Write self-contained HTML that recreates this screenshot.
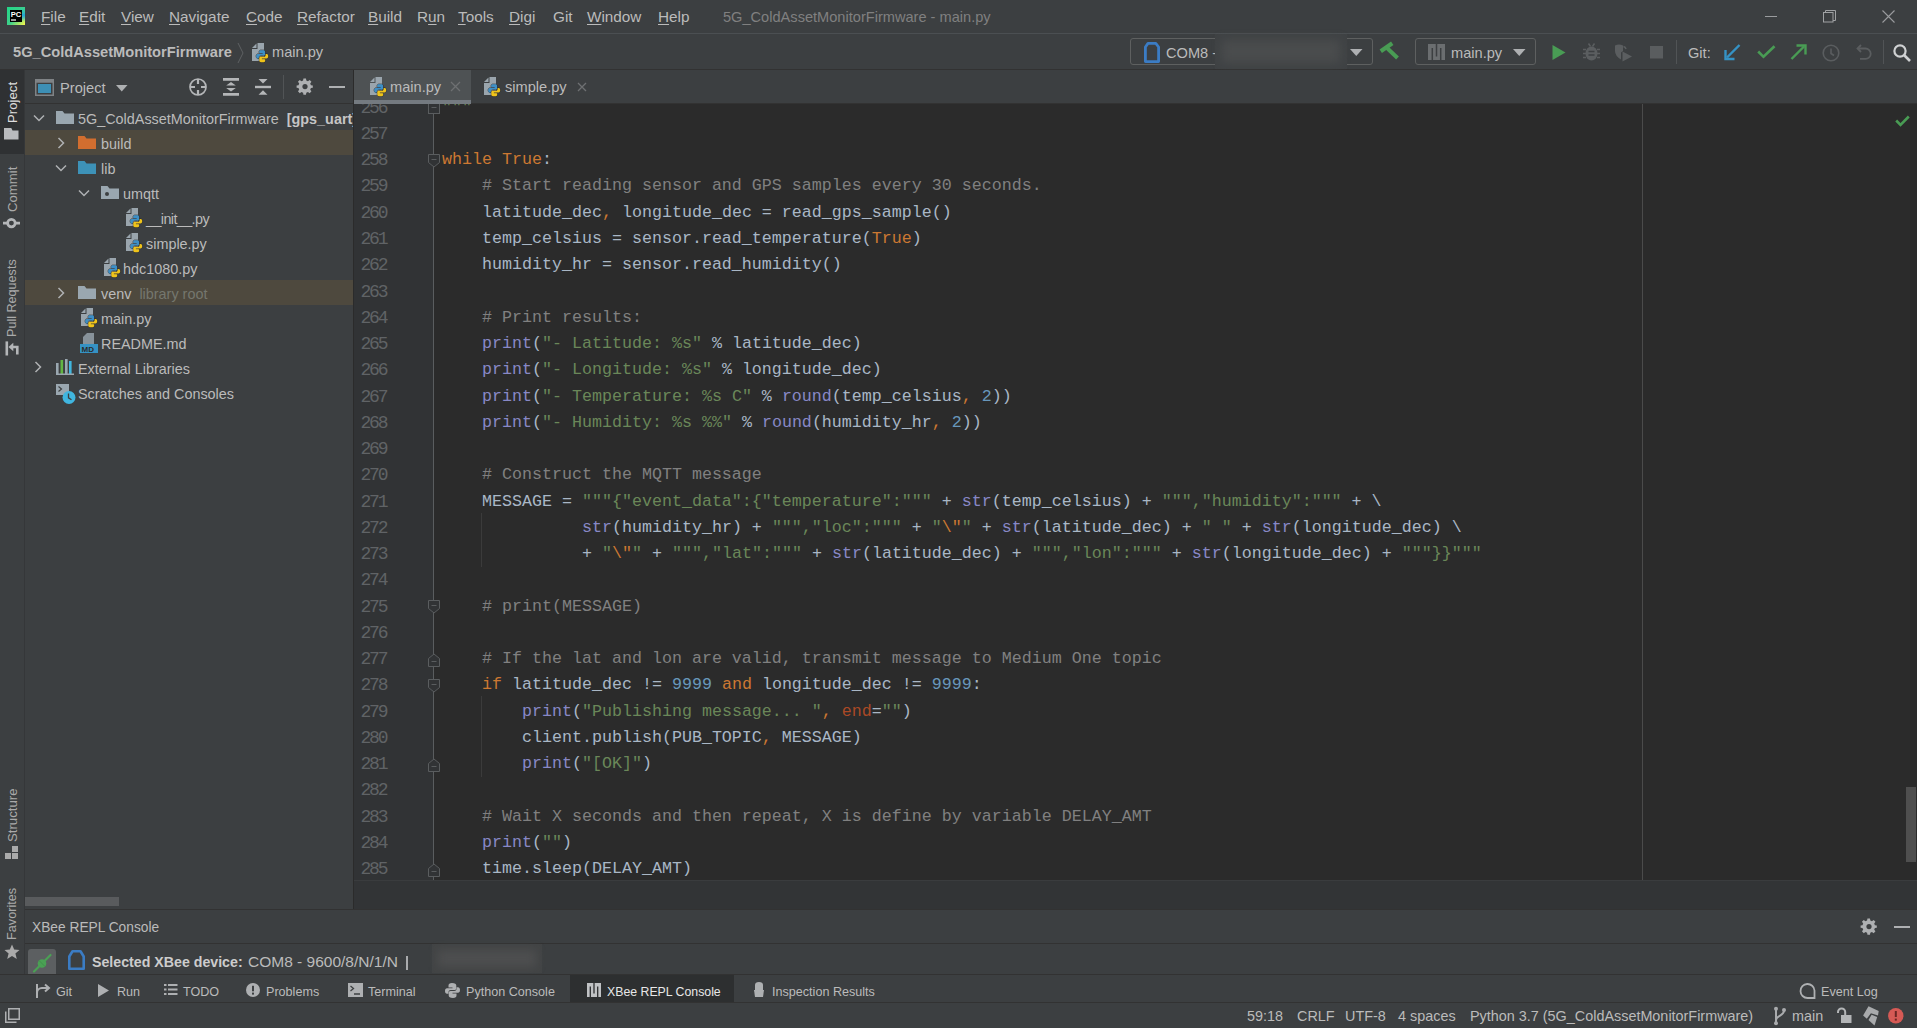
<!DOCTYPE html>
<html><head><meta charset="utf-8">
<style>
*{margin:0;padding:0;box-sizing:border-box}
html,body{width:1917px;height:1028px;overflow:hidden;background:#3c3f41;font-family:"Liberation Sans",sans-serif;font-size:14.5px;color:#bbbbbb}
.a{position:absolute}
.t{position:absolute;white-space:pre;line-height:1}
svg{position:absolute;overflow:visible}
.code{position:absolute;font-family:"Liberation Mono",monospace;font-size:16.67px;line-height:1;color:#a9b7c6;white-space:pre}
.ln{position:absolute;width:40px;text-align:right;font-family:"Liberation Mono",monospace;font-size:18px;letter-spacing:-2.1px;line-height:1;color:#606366;white-space:pre}
.k{color:#cc7832}.c{color:#808080}.s{color:#6a8759}.n{color:#6897bb}.b{color:#8888c6}.p{color:#aa4926}
</style></head><body>

<div class="a" style="left:0px;top:0px;width:1917px;height:33px;background:#3c3f41;"></div>
<div class="a" style="left:0px;top:33px;width:1917px;height:1px;background:#4b4f52;"></div>
<svg style="left:7px;top:7px;" width="18" height="18" viewBox="0 0 18 18"><defs><linearGradient id="pcg" x1="0" y1="0" x2="1" y2="1"><stop offset="0" stop-color="#21d789"/><stop offset="0.55" stop-color="#3fd08a"/><stop offset="1" stop-color="#fcf84a"/></linearGradient>
<linearGradient id="pcb" x1="0" y1="0" x2="0" y2="1"><stop offset="0" stop-color="#21c8b0" stop-opacity="0"/><stop offset="0.45" stop-color="#1fa5d8"/><stop offset="0.8" stop-color="#1fa5d8" stop-opacity="0"/></linearGradient></defs>
<rect x="0" y="0" width="18" height="18" fill="url(#pcg)"/><rect x="13" y="0" width="5" height="18" fill="url(#pcb)"/><rect x="3" y="3" width="12" height="12" fill="#000"/>
<text x="3.8" y="9.9" font-family="Liberation Sans" font-weight="bold" font-size="7.6" fill="#fff">PC</text><rect x="4" y="12.3" width="5" height="1.4" fill="#ddd"/></svg>
<div class="t" style="left:41px;top:9.05px;font-size:15.3px;color:#bbbbbb;"><span style="text-decoration:underline;text-underline-offset:2px">F</span>ile</div>
<div class="t" style="left:79px;top:9.05px;font-size:15.3px;color:#bbbbbb;"><span style="text-decoration:underline;text-underline-offset:2px">E</span>dit</div>
<div class="t" style="left:121px;top:9.05px;font-size:15.3px;color:#bbbbbb;"><span style="text-decoration:underline;text-underline-offset:2px">V</span>iew</div>
<div class="t" style="left:169px;top:9.05px;font-size:15.3px;color:#bbbbbb;"><span style="text-decoration:underline;text-underline-offset:2px">N</span>avigate</div>
<div class="t" style="left:246px;top:9.05px;font-size:15.3px;color:#bbbbbb;"><span style="text-decoration:underline;text-underline-offset:2px">C</span>ode</div>
<div class="t" style="left:297px;top:9.05px;font-size:15.3px;color:#bbbbbb;"><span style="text-decoration:underline;text-underline-offset:2px">R</span>efactor</div>
<div class="t" style="left:368px;top:9.05px;font-size:15.3px;color:#bbbbbb;"><span style="text-decoration:underline;text-underline-offset:2px">B</span>uild</div>
<div class="t" style="left:417px;top:9.05px;font-size:15.3px;color:#bbbbbb;">R<span style="text-decoration:underline;text-underline-offset:2px">u</span>n</div>
<div class="t" style="left:458px;top:9.05px;font-size:15.3px;color:#bbbbbb;"><span style="text-decoration:underline;text-underline-offset:2px">T</span>ools</div>
<div class="t" style="left:509px;top:9.05px;font-size:15.3px;color:#bbbbbb;"><span style="text-decoration:underline;text-underline-offset:2px">D</span>igi</div>
<div class="t" style="left:553px;top:9.05px;font-size:15.3px;color:#bbbbbb;">Git</div>
<div class="t" style="left:587px;top:9.05px;font-size:15.3px;color:#bbbbbb;"><span style="text-decoration:underline;text-underline-offset:2px">W</span>indow</div>
<div class="t" style="left:658px;top:9.05px;font-size:15.3px;color:#bbbbbb;"><span style="text-decoration:underline;text-underline-offset:2px">H</span>elp</div>
<div class="t" style="left:723px;top:9.64px;font-size:14.6px;color:#808080;">5G_ColdAssetMonitorFirmware - main.py</div>
<svg style="left:1765px;top:10px;" width="14" height="14" viewBox="0 0 14 14"><line x1="0" y1="6.5" x2="12" y2="6.5" stroke="#9a9c9e" stroke-width="1"/></svg>
<svg style="left:1823px;top:10px;" width="14" height="14" viewBox="0 0 14 14"><rect x="0.5" y="2.5" width="9.5" height="9.5" fill="none" stroke="#a0a2a4"/><path d="M2.5 2.5V0.5H12.5V10.5H10" fill="none" stroke="#a0a2a4"/></svg>
<svg style="left:1882px;top:10px;" width="13" height="13" viewBox="0 0 13 13"><path d="M0.5 0.5L12.5 12.5M12.5 0.5L0.5 12.5" stroke="#9a9c9e" stroke-width="1.1"/></svg>
<div class="a" style="left:0px;top:34px;width:1917px;height:35px;background:#3c3f41;"></div>
<div class="a" style="left:0px;top:69px;width:1917px;height:1px;background:#323232;"></div>
<div class="t" style="left:13px;top:44.60px;font-size:14.65px;color:#bbbbbb;font-weight:bold;">5G_ColdAssetMonitorFirmware</div>
<svg style="left:237px;top:42px;" width="8" height="22" viewBox="0 0 8 22"><path d="M1 1L6 11L1 21" fill="none" stroke="#5e6163" stroke-width="1"/></svg>
<svg style="left:251px;top:43px;" width="18" height="20" viewBox="0 0 18 20"><path d="M6.5 0H13V18H1V6H6.5Z" fill="#9aa5ad"/><path d="M1 5L5.5 0.5V5Z" fill="#9aa5ad"/>
<g transform="translate(5.2 7.2)" stroke="#2b2d2e" stroke-width="0.9" paint-order="stroke">
<path d="M6 0H4.6C3.5 0 3 .6 3 1.6V3H6.4V3.8H1.6C.6 3.8 0 4.6 0 6s.6 2.3 1.6 2.3H2.6V6.9C2.6 6 3.3 5.4 4.1 5.4H7.4C8.2 5.4 8.9 4.8 8.9 4V1.6C8.9 .7 8.1 0 7.3 0Z" fill="#3d8fc6"/>
<path d="M6 12H7.4C8.5 12 9 11.4 9 10.4V9H5.6V8.2H10.4C11.4 8.2 12 7.4 12 6s-.6-2.3-1.6-2.3H9.4V5.1C9.4 6 8.7 6.6 7.9 6.6H4.6C3.8 6.6 3.1 7.2 3.1 8V10.4C3.1 11.3 3.9 12 4.7 12Z" fill="#f0c419"/></g></svg>
<div class="t" style="left:272px;top:44.64px;font-size:14.6px;color:#bbbbbb;">main.py</div>
<div class="a" style="left:1130px;top:38px;width:243px;height:27px;border:1px solid #5e6060;border-radius:3px"></div>
<svg style="left:1144px;top:42px;" width="16" height="21" viewBox="0 0 16 21"><path d="M4 1.4H11.8L14.6 5V19.6H1.4V5Z" fill="none" stroke="#3b7cc4" stroke-width="2.8" stroke-linejoin="round"/></svg>
<div class="t" style="left:1166px;top:45.64px;font-size:14.6px;color:#bbbbbb;">COM8 -</div>
<div class="a" style="left:1215px;top:34px;width:132px;height:35px;background:#3f4244;"></div>
<div class="a" style="left:1222px;top:40px;width:118px;height:23px;background:#4a4c4d;filter:blur(5px)"></div>
<svg style="left:1350px;top:49px;" width="13" height="8" viewBox="0 0 13 8"><path d="M0 0H12.5L6.25 7Z" fill="#aeb0b2"/></svg>
<svg style="left:1380px;top:42px;" width="21" height="19" viewBox="0 0 21 19"><path d="M2.5 8L10.5 2.5" stroke="#499c54" stroke-width="4.2" stroke-linecap="square"/><path d="M6.5 5.5L17.5 16" stroke="#499c54" stroke-width="4"/></svg>
<div class="a" style="left:1415px;top:38px;width:121px;height:27px;border:1px solid #5e6060;border-radius:3px"></div>
<svg style="left:1428px;top:44px;" width="17" height="16" viewBox="0 0 17 16"><rect x="0" y="0" width="17" height="16" fill="#6b6e70"/><path d="M4.3 4V16M12.7 4V16M8.5 0V12.5" stroke="#3c3f41" stroke-width="1.5"/></svg>
<div class="t" style="left:1451px;top:45.64px;font-size:14.6px;color:#bbbbbb;">main.py</div>
<svg style="left:1513px;top:49px;" width="13" height="8" viewBox="0 0 13 8"><path d="M0 0H12.5L6.25 7Z" fill="#aeb0b2"/></svg>
<svg style="left:1552px;top:45px;" width="14" height="15" viewBox="0 0 14 15"><path d="M0.5 0L13.5 7.5L0.5 15Z" fill="#499c54"/></svg>
<svg style="left:1583px;top:43px;" width="17" height="18" viewBox="0 0 17 18"><path d="M5.5 0.5L7.5 3.5M11.5 0.5L9.5 3.5" stroke="#5b5e60" stroke-width="1.5"/><ellipse cx="8.5" cy="10.5" rx="6" ry="7" fill="#5b5e60"/><path d="M0 6.5H3M14 6.5H17M0 10.5H3M14 10.5H17M0 14.5H3M14 14.5H17" stroke="#5b5e60" stroke-width="1.6"/><path d="M5.5 8.5H11.5M5.5 12H11.5" stroke="#3c3f41" stroke-width="1.5"/></svg>
<svg style="left:1614px;top:44px;" width="19" height="18" viewBox="0 0 19 18"><path d="M1 1.5Q5 -0.5 9 1.5V7L7 8.5V15.5Q1 12 1 7Z" fill="#5b5e60"/><path d="M9.5 2.5Q11.5 3 12 5" fill="none" stroke="#5b5e60" stroke-width="1.5"/><path d="M8.5 7.5L18 12.5L8.5 17.5Z" fill="#5b5e60"/></svg>
<svg style="left:1650px;top:46px;" width="13" height="13" viewBox="0 0 13 13"><rect x="0" y="0" width="13" height="12.5" fill="#5a5d5f"/></svg>
<div class="a" style="left:1676px;top:40px;width:1px;height:24px;background:#515456;"></div>
<div class="t" style="left:1688px;top:45.64px;font-size:14.6px;color:#bbbbbb;">Git:</div>
<svg style="left:1724px;top:44px;" width="17" height="16" viewBox="0 0 17 16"><path d="M15.5 1L3 13.5" stroke="#3592c4" stroke-width="2.4"/><path d="M1.5 6V15H10.5" fill="none" stroke="#3592c4" stroke-width="2.4"/></svg>
<svg style="left:1757px;top:45px;" width="19" height="14" viewBox="0 0 19 14"><path d="M1.2 6.5L6.5 11.8L17.5 1.2" fill="none" stroke="#499c54" stroke-width="2.6"/></svg>
<svg style="left:1790px;top:44px;" width="17" height="16" viewBox="0 0 17 16"><path d="M1.5 15L14 2.5" stroke="#499c54" stroke-width="2.4"/><path d="M6.5 1.5H15.5V10.5" fill="none" stroke="#499c54" stroke-width="2.4"/></svg>
<svg style="left:1822px;top:44px;" width="18" height="18" viewBox="0 0 18 18"><circle cx="9" cy="9" r="7.8" fill="none" stroke="#5a5d5f" stroke-width="1.6"/><path d="M9 4.5V9.5L12 11.5" fill="none" stroke="#5a5d5f" stroke-width="1.6"/></svg>
<svg style="left:1856px;top:44px;" width="17" height="17" viewBox="0 0 17 17"><path d="M5 1L1.5 4.5L5 8" fill="none" stroke="#5a5d5f" stroke-width="1.8"/><path d="M2 4.5H9.5a5.2 5.2 0 0 1 0 10.4H4" fill="none" stroke="#5a5d5f" stroke-width="1.8"/></svg>
<div class="a" style="left:1883px;top:40px;width:1px;height:24px;background:#515456;"></div>
<svg style="left:1893px;top:44px;" width="19" height="18" viewBox="0 0 19 18"><circle cx="7" cy="7" r="5.6" fill="none" stroke="#cfd1d2" stroke-width="2.2"/><path d="M11 11L17 17" stroke="#cfd1d2" stroke-width="2.6"/></svg>
<div class="a" style="left:0px;top:70px;width:24px;height:905px;background:#3c3f41;"></div>
<div class="a" style="left:0px;top:70px;width:24px;height:84px;background:#2f3133;"></div>
<div class="a" style="left:24px;top:70px;width:1px;height:905px;background:#353739;"></div>
<div class="t" style="left:5.74px;top:123px;font-size:13.2px;color:#dddddd;transform-origin:0 0;transform:rotate(-90deg)">Project</div>
<svg style="left:4px;top:128px;" width="15" height="12" viewBox="0 0 15 12"><path d="M0 0H7.3L8.5 2.5H14.5V11.5H0Z" fill="#b9bbbe"/></svg>
<div class="t" style="left:5.74px;top:212px;font-size:13.2px;color:#aaaaaa;transform-origin:0 0;transform:rotate(-90deg)">Commit</div>
<svg style="left:2px;top:216px;" width="18" height="14" viewBox="0 0 18 14"><circle cx="9.4" cy="7.1" r="3.8" fill="none" stroke="#b4b6b8" stroke-width="2.7"/><path d="M1 7.1H5.6M13.2 7.1H18" stroke="#b4b6b8" stroke-width="2.6"/></svg>
<div class="t" style="left:6.07px;top:337px;font-size:12.6px;color:#aaaaaa;transform-origin:0 0;transform:rotate(-90deg)">Pull Requests</div>
<svg style="left:4px;top:340px;" width="16" height="17" viewBox="0 0 16 17"><rect x="1.5" y="1.4" width="2.6" height="14.1" fill="#b4b6b8"/><path d="M4.5 7L9.3 2.8V11.2Z" fill="#b4b6b8"/><path d="M8 7H13.3V14.5" fill="none" stroke="#b4b6b8" stroke-width="2.6"/></svg>
<div class="t" style="left:5.74px;top:842px;font-size:13.2px;color:#aaaaaa;transform-origin:0 0;transform:rotate(-90deg)">Structure</div>
<svg style="left:5px;top:846px;" width="14" height="14" viewBox="0 0 14 14"><rect x="0" y="7" width="6" height="6" fill="#aaaaaa"/><rect x="7" y="7" width="6" height="6" fill="#aaaaaa"/><rect x="7" y="0" width="6" height="6" fill="#aaaaaa"/></svg>
<div class="t" style="left:6.01px;top:940px;font-size:12.7px;color:#aaaaaa;transform-origin:0 0;transform:rotate(-90deg)">Favorites</div>
<svg style="left:4px;top:944px;" width="16" height="16" viewBox="0 0 16 16"><path d="M8 0.5L10.2 5.6L15.5 6L11.4 9.6L12.8 15L8 12L3.2 15L4.6 9.6L0.5 6L5.8 5.6Z" fill="#aaaaaa"/></svg>
<div class="a" style="left:25px;top:70px;width:328px;height:839px;background:#3c3f41;"></div>
<div class="a" style="left:25px;top:103px;width:328px;height:1px;background:#323232;"></div>
<svg style="left:35px;top:79px;" width="19" height="17" viewBox="0 0 19 17"><rect x="0.75" y="0.75" width="17.5" height="15.5" fill="none" stroke="#7f8386" stroke-width="1.5"/><rect x="0.75" y="0.75" width="17.5" height="3" fill="#7f8386"/><rect x="3" y="5" width="13" height="9" fill="#3d8fb5"/></svg>
<div class="t" style="left:60px;top:80.60px;font-size:14.65px;color:#bbbbbb;">Project</div>
<svg style="left:116px;top:85px;" width="12" height="7" viewBox="0 0 12 7"><path d="M0 0H11.5L5.75 6.5Z" fill="#aeb0b2"/></svg>
<svg style="left:189px;top:78px;" width="18" height="18" viewBox="0 0 18 18"><circle cx="9" cy="9" r="8" fill="none" stroke="#b4b6b8" stroke-width="1.7"/><path d="M9 1V6M9 12V17M1 9H6M12 9H17" stroke="#b4b6b8" stroke-width="2.2"/></svg>
<svg style="left:223px;top:77px;" width="16" height="20" viewBox="0 0 16 20"><path d="M0 2.4H16M0 17.4H16" stroke="#b4b6b8" stroke-width="2.6"/><path d="M3.2 8.6L8 5L12.8 8.6ZM3.2 11L8 14.6L12.8 11Z" fill="#b4b6b8"/></svg>
<svg style="left:255px;top:77px;" width="16" height="20" viewBox="0 0 16 20"><path d="M0 10H16" stroke="#b4b6b8" stroke-width="2.4"/><path d="M3.5 2L8 6.6L12.5 2ZM3.5 17.8L8 13.2L12.5 17.8Z" fill="#b4b6b8"/></svg>
<div class="a" style="left:283px;top:75px;width:1px;height:24px;background:#515456;"></div>
<svg style="left:297px;top:79px;" width="16" height="16" viewBox="0 0 16 16"><path d="M6.6 0H9.4L9.8 2.3L11.6 3.1L13.5 1.7L15.5 3.7L14.1 5.6L14.9 7.4L17 7.8V10.2L14.9 10.6L14.1 12.4L15.5 14.3L13.5 16.3L11.6 14.9L9.8 15.7L9.4 18H6.6L6.2 15.7L4.4 14.9L2.5 16.3L0.5 14.3L1.9 12.4L1.1 10.6L-1 10.2V7.8L1.1 7.4L1.9 5.6L0.5 3.7L2.5 1.7L4.4 3.1L6.2 2.3Z" transform="translate(0.5 -0.5) scale(0.9)" fill="#aeb0b2"/><circle cx="8" cy="7.6" r="2.6" fill="#3c3f41"/></svg>
<div class="a" style="left:329px;top:86px;width:16px;height:2px;background:#aeb0b2;"></div>
<div class="a" style="left:25px;top:130px;width:328px;height:25px;background:#4e493e;"></div>
<div class="a" style="left:25px;top:280px;width:328px;height:25px;background:#4e493e;"></div>
<svg style="left:32.5px;top:114px;" width="12" height="8" viewBox="0 0 12 8"><path d="M1 1.5L6 6.5L11 1.5" fill="none" stroke="#afb1b3" stroke-width="1.5"/></svg>
<svg style="left:56px;top:111px;" width="18" height="13" viewBox="0 0 18 13"><path d="M0 0H6.5L8.5 2.5H18V13H0Z" fill="#9aa7b0"/></svg>
<div class="t" style="left:78px;top:111.81px;font-size:14.4px;color:#bbbbbb;width:275px;overflow:hidden;height:20px">5G_ColdAssetMonitorFirmware<b style="color:#c5c5c5;margin-left:8px">[gps_uart]</b></div>
<svg style="left:57px;top:137px;" width="8" height="12" viewBox="0 0 8 12"><path d="M1.5 1L6.5 6L1.5 11" fill="none" stroke="#afb1b3" stroke-width="1.5"/></svg>
<svg style="left:78px;top:136px;" width="18" height="13" viewBox="0 0 18 13"><path d="M0 0H6.5L8.5 2.5H18V13H0Z" fill="#d26e2f"/></svg>
<div class="t" style="left:101px;top:136.81px;font-size:14.4px;color:#bbbbbb;">build</div>
<svg style="left:55px;top:164px;" width="12" height="8" viewBox="0 0 12 8"><path d="M1 1.5L6 6.5L11 1.5" fill="none" stroke="#afb1b3" stroke-width="1.5"/></svg>
<svg style="left:78px;top:161px;" width="18" height="13" viewBox="0 0 18 13"><path d="M0 0H6.5L8.5 2.5H18V13H0Z" fill="#3d92b8"/></svg>
<div class="t" style="left:101px;top:161.81px;font-size:14.4px;color:#bbbbbb;">lib</div>
<svg style="left:77.5px;top:189px;" width="12" height="8" viewBox="0 0 12 8"><path d="M1 1.5L6 6.5L11 1.5" fill="none" stroke="#afb1b3" stroke-width="1.5"/></svg>
<svg style="left:101px;top:186px;" width="18" height="13" viewBox="0 0 18 13"><path d="M0 0H6.5L8.5 2.5H18V13H0Z" fill="#9aa7b0"/><circle cx="6" cy="8" r="2" fill="#3c3f41"/></svg>
<div class="t" style="left:123px;top:186.81px;font-size:14.4px;color:#bbbbbb;">umqtt</div>
<svg style="left:125px;top:208px;" width="18" height="20" viewBox="0 0 18 20"><path d="M6.5 0H13V18H1V6H6.5Z" fill="#9aa5ad"/><path d="M1 5L5.5 0.5V5Z" fill="#9aa5ad"/>
<g transform="translate(5.2 7.2)" stroke="#2b2d2e" stroke-width="0.9" paint-order="stroke">
<path d="M6 0H4.6C3.5 0 3 .6 3 1.6V3H6.4V3.8H1.6C.6 3.8 0 4.6 0 6s.6 2.3 1.6 2.3H2.6V6.9C2.6 6 3.3 5.4 4.1 5.4H7.4C8.2 5.4 8.9 4.8 8.9 4V1.6C8.9 .7 8.1 0 7.3 0Z" fill="#3d8fc6"/>
<path d="M6 12H7.4C8.5 12 9 11.4 9 10.4V9H5.6V8.2H10.4C11.4 8.2 12 7.4 12 6s-.6-2.3-1.6-2.3H9.4V5.1C9.4 6 8.7 6.6 7.9 6.6H4.6C3.8 6.6 3.1 7.2 3.1 8V10.4C3.1 11.3 3.9 12 4.7 12Z" fill="#f0c419"/></g></svg>
<div class="t" style="left:146px;top:211.81px;font-size:14.4px;color:#bbbbbb;letter-spacing:-0.6px;">__init__.py</div>
<svg style="left:125px;top:233px;" width="18" height="20" viewBox="0 0 18 20"><path d="M6.5 0H13V18H1V6H6.5Z" fill="#9aa5ad"/><path d="M1 5L5.5 0.5V5Z" fill="#9aa5ad"/>
<g transform="translate(5.2 7.2)" stroke="#2b2d2e" stroke-width="0.9" paint-order="stroke">
<path d="M6 0H4.6C3.5 0 3 .6 3 1.6V3H6.4V3.8H1.6C.6 3.8 0 4.6 0 6s.6 2.3 1.6 2.3H2.6V6.9C2.6 6 3.3 5.4 4.1 5.4H7.4C8.2 5.4 8.9 4.8 8.9 4V1.6C8.9 .7 8.1 0 7.3 0Z" fill="#3d8fc6"/>
<path d="M6 12H7.4C8.5 12 9 11.4 9 10.4V9H5.6V8.2H10.4C11.4 8.2 12 7.4 12 6s-.6-2.3-1.6-2.3H9.4V5.1C9.4 6 8.7 6.6 7.9 6.6H4.6C3.8 6.6 3.1 7.2 3.1 8V10.4C3.1 11.3 3.9 12 4.7 12Z" fill="#f0c419"/></g></svg>
<div class="t" style="left:146px;top:236.81px;font-size:14.4px;color:#bbbbbb;">simple.py</div>
<svg style="left:103px;top:258px;" width="18" height="20" viewBox="0 0 18 20"><path d="M6.5 0H13V18H1V6H6.5Z" fill="#9aa5ad"/><path d="M1 5L5.5 0.5V5Z" fill="#9aa5ad"/>
<g transform="translate(5.2 7.2)" stroke="#2b2d2e" stroke-width="0.9" paint-order="stroke">
<path d="M6 0H4.6C3.5 0 3 .6 3 1.6V3H6.4V3.8H1.6C.6 3.8 0 4.6 0 6s.6 2.3 1.6 2.3H2.6V6.9C2.6 6 3.3 5.4 4.1 5.4H7.4C8.2 5.4 8.9 4.8 8.9 4V1.6C8.9 .7 8.1 0 7.3 0Z" fill="#3d8fc6"/>
<path d="M6 12H7.4C8.5 12 9 11.4 9 10.4V9H5.6V8.2H10.4C11.4 8.2 12 7.4 12 6s-.6-2.3-1.6-2.3H9.4V5.1C9.4 6 8.7 6.6 7.9 6.6H4.6C3.8 6.6 3.1 7.2 3.1 8V10.4C3.1 11.3 3.9 12 4.7 12Z" fill="#f0c419"/></g></svg>
<div class="t" style="left:123px;top:261.81px;font-size:14.4px;color:#bbbbbb;">hdc1080.py</div>
<svg style="left:57px;top:287px;" width="8" height="12" viewBox="0 0 8 12"><path d="M1.5 1L6.5 6L1.5 11" fill="none" stroke="#afb1b3" stroke-width="1.5"/></svg>
<svg style="left:78px;top:286px;" width="18" height="13" viewBox="0 0 18 13"><path d="M0 0H6.5L8.5 2.5H18V13H0Z" fill="#9aa7b0"/></svg>
<div class="t" style="left:101px;top:286.81px;font-size:14.4px;color:#bbbbbb;">venv  <span style="color:#75776e">library root</span></div>
<svg style="left:80px;top:308px;" width="18" height="20" viewBox="0 0 18 20"><path d="M6.5 0H13V18H1V6H6.5Z" fill="#9aa5ad"/><path d="M1 5L5.5 0.5V5Z" fill="#9aa5ad"/>
<g transform="translate(5.2 7.2)" stroke="#2b2d2e" stroke-width="0.9" paint-order="stroke">
<path d="M6 0H4.6C3.5 0 3 .6 3 1.6V3H6.4V3.8H1.6C.6 3.8 0 4.6 0 6s.6 2.3 1.6 2.3H2.6V6.9C2.6 6 3.3 5.4 4.1 5.4H7.4C8.2 5.4 8.9 4.8 8.9 4V1.6C8.9 .7 8.1 0 7.3 0Z" fill="#3d8fc6"/>
<path d="M6 12H7.4C8.5 12 9 11.4 9 10.4V9H5.6V8.2H10.4C11.4 8.2 12 7.4 12 6s-.6-2.3-1.6-2.3H9.4V5.1C9.4 6 8.7 6.6 7.9 6.6H4.6C3.8 6.6 3.1 7.2 3.1 8V10.4C3.1 11.3 3.9 12 4.7 12Z" fill="#f0c419"/></g></svg>
<div class="t" style="left:101px;top:311.81px;font-size:14.4px;color:#bbbbbb;">main.py</div>
<svg style="left:80px;top:333px;" width="18" height="20" viewBox="0 0 18 20"><path d="M3 4L7 0H14V12H3Z" fill="#9aa7b0" opacity="0.8"/><rect x="0" y="11" width="18" height="9" fill="#3592c4"/><text x="1.5" y="18.8" font-family="Liberation Sans" font-weight="bold" font-size="8" fill="#2b2b2b">MD</text></svg>
<div class="t" style="left:101px;top:336.81px;font-size:14.4px;color:#bbbbbb;">README.md</div>
<svg style="left:34px;top:361px;" width="8" height="12" viewBox="0 0 8 12"><path d="M1.5 1L6.5 6L1.5 11" fill="none" stroke="#afb1b3" stroke-width="1.5"/></svg>
<svg style="left:56px;top:359px;" width="18" height="16" viewBox="0 0 18 16"><rect x="0" y="4" width="2.6" height="12" fill="#9aa7b0"/><rect x="4.5" y="1" width="2.6" height="15" fill="#62b543"/><rect x="9" y="0" width="2.6" height="16" fill="#9aa7b0"/><rect x="13" y="2" width="2.6" height="14" fill="#40b6e0"/><rect x="0" y="14.5" width="18" height="1.5" fill="#9aa7b0"/></svg>
<div class="t" style="left:78px;top:361.81px;font-size:14.4px;color:#bbbbbb;">External Libraries</div>
<svg style="left:56px;top:384px;" width="20" height="20" viewBox="0 0 20 20"><rect x="0" y="0" width="13" height="11" fill="#9aa7b0"/><path d="M2.5 2.5L5.5 5L2.5 7.5" fill="none" stroke="#3c3f41" stroke-width="1.2"/><circle cx="13" cy="13.5" r="6.5" fill="#40b6e0"/><path d="M12.5 9.5V13.8L15.5 15.8" fill="none" stroke="#3c3f41" stroke-width="1.3"/></svg>
<div class="t" style="left:78px;top:386.81px;font-size:14.4px;color:#bbbbbb;">Scratches and Consoles</div>
<div class="a" style="left:25px;top:897px;width:94px;height:9px;background:#595b5d;"></div>
<div class="a" style="left:353px;top:70px;width:1px;height:839px;background:#2b2b2b;"></div>
<div class="a" style="left:354px;top:70px;width:1563px;height:33px;background:#3c3f41;"></div>
<div class="a" style="left:354px;top:103px;width:1563px;height:1px;background:#323232;"></div>
<div class="a" style="left:354px;top:70px;width:117px;height:30px;background:#4e5254;"></div>
<div class="a" style="left:354px;top:100px;width:117px;height:4px;background:#747a80;"></div>
<svg style="left:369px;top:77px;" width="18" height="20" viewBox="0 0 18 20"><path d="M6.5 0H13V18H1V6H6.5Z" fill="#9aa5ad"/><path d="M1 5L5.5 0.5V5Z" fill="#9aa5ad"/>
<g transform="translate(5.2 7.2)" stroke="#2b2d2e" stroke-width="0.9" paint-order="stroke">
<path d="M6 0H4.6C3.5 0 3 .6 3 1.6V3H6.4V3.8H1.6C.6 3.8 0 4.6 0 6s.6 2.3 1.6 2.3H2.6V6.9C2.6 6 3.3 5.4 4.1 5.4H7.4C8.2 5.4 8.9 4.8 8.9 4V1.6C8.9 .7 8.1 0 7.3 0Z" fill="#3d8fc6"/>
<path d="M6 12H7.4C8.5 12 9 11.4 9 10.4V9H5.6V8.2H10.4C11.4 8.2 12 7.4 12 6s-.6-2.3-1.6-2.3H9.4V5.1C9.4 6 8.7 6.6 7.9 6.6H4.6C3.8 6.6 3.1 7.2 3.1 8V10.4C3.1 11.3 3.9 12 4.7 12Z" fill="#f0c419"/></g></svg>
<div class="t" style="left:390px;top:79.64px;font-size:14.6px;color:#bbbbbb;">main.py</div>
<svg style="left:450px;top:81px;" width="11" height="11" viewBox="0 0 11 11"><path d="M1 1L10 10M10 1L1 10" stroke="#6e7072" stroke-width="1.3"/></svg>
<svg style="left:483px;top:77px;" width="18" height="20" viewBox="0 0 18 20"><path d="M6.5 0H13V18H1V6H6.5Z" fill="#9aa5ad"/><path d="M1 5L5.5 0.5V5Z" fill="#9aa5ad"/>
<g transform="translate(5.2 7.2)" stroke="#2b2d2e" stroke-width="0.9" paint-order="stroke">
<path d="M6 0H4.6C3.5 0 3 .6 3 1.6V3H6.4V3.8H1.6C.6 3.8 0 4.6 0 6s.6 2.3 1.6 2.3H2.6V6.9C2.6 6 3.3 5.4 4.1 5.4H7.4C8.2 5.4 8.9 4.8 8.9 4V1.6C8.9 .7 8.1 0 7.3 0Z" fill="#3d8fc6"/>
<path d="M6 12H7.4C8.5 12 9 11.4 9 10.4V9H5.6V8.2H10.4C11.4 8.2 12 7.4 12 6s-.6-2.3-1.6-2.3H9.4V5.1C9.4 6 8.7 6.6 7.9 6.6H4.6C3.8 6.6 3.1 7.2 3.1 8V10.4C3.1 11.3 3.9 12 4.7 12Z" fill="#f0c419"/></g></svg>
<div class="t" style="left:505px;top:79.64px;font-size:14.6px;color:#bbbbbb;">simple.py</div>
<svg style="left:577px;top:82px;" width="10" height="10" viewBox="0 0 10 10"><path d="M1 1L9 9M9 1L1 9" stroke="#6e7072" stroke-width="1.3"/></svg>
<div class="a" style="left:354px;top:104px;width:1563px;height:776px;background:#2b2b2b;"></div>
<div class="a" style="left:354px;top:104px;width:80px;height:776px;background:#313335;"></div>
<div class="a" style="left:1642px;top:104px;width:1px;height:776px;background:#4b4b4b;"></div>
<svg style="left:1895px;top:115px;" width="15" height="12" viewBox="0 0 15 12"><path d="M1.2 5.5L5.5 9.8L13.8 1.5" fill="none" stroke="#499c54" stroke-width="2.6"/></svg>
<div class="a" style="left:1906px;top:787px;width:10px;height:75px;background:#4f4f4f;"></div>
<div class="a" style="left:354px;top:104px;width:1563px;height:776px;overflow:hidden">
<div class="ln" style="left:-7.5px;top:-5.32px">256</div>
<div class="code" style="left:88px;top:-4.30px"><span class="s">&quot;&quot;&quot;</span></div>
<div class="ln" style="left:-7.5px;top:20.94px">257</div>
<div class="ln" style="left:-7.5px;top:47.20px">258</div>
<div class="code" style="left:88px;top:48.22px"><span class="k">while</span> <span class="k">True</span>:</div>
<div class="ln" style="left:-7.5px;top:73.46px">259</div>
<div class="code" style="left:88px;top:74.48px">    <span class="c"># Start reading sensor and GPS samples every 30 seconds.</span></div>
<div class="ln" style="left:-7.5px;top:99.72px">260</div>
<div class="code" style="left:88px;top:100.74px">    latitude_dec<span class="k">,</span> longitude_dec = read_gps_sample()</div>
<div class="ln" style="left:-7.5px;top:125.98px">261</div>
<div class="code" style="left:88px;top:127.00px">    temp_celsius = sensor.read_temperature(<span class="k">True</span>)</div>
<div class="ln" style="left:-7.5px;top:152.24px">262</div>
<div class="code" style="left:88px;top:153.26px">    humidity_hr = sensor.read_humidity()</div>
<div class="ln" style="left:-7.5px;top:178.50px">263</div>
<div class="ln" style="left:-7.5px;top:204.76px">264</div>
<div class="code" style="left:88px;top:205.78px">    <span class="c"># Print results:</span></div>
<div class="ln" style="left:-7.5px;top:231.02px">265</div>
<div class="code" style="left:88px;top:232.04px">    <span class="b">print</span>(<span class="s">&quot;- Latitude: %s&quot;</span> % latitude_dec)</div>
<div class="ln" style="left:-7.5px;top:257.28px">266</div>
<div class="code" style="left:88px;top:258.30px">    <span class="b">print</span>(<span class="s">&quot;- Longitude: %s&quot;</span> % longitude_dec)</div>
<div class="ln" style="left:-7.5px;top:283.54px">267</div>
<div class="code" style="left:88px;top:284.56px">    <span class="b">print</span>(<span class="s">&quot;- Temperature: %s C&quot;</span> % <span class="b">round</span>(temp_celsius<span class="k">,</span> <span class="n">2</span>))</div>
<div class="ln" style="left:-7.5px;top:309.80px">268</div>
<div class="code" style="left:88px;top:310.82px">    <span class="b">print</span>(<span class="s">&quot;- Humidity: %s %%&quot;</span> % <span class="b">round</span>(humidity_hr<span class="k">,</span> <span class="n">2</span>))</div>
<div class="ln" style="left:-7.5px;top:336.06px">269</div>
<div class="ln" style="left:-7.5px;top:362.32px">270</div>
<div class="code" style="left:88px;top:363.34px">    <span class="c"># Construct the MQTT message</span></div>
<div class="ln" style="left:-7.5px;top:388.58px">271</div>
<div class="code" style="left:88px;top:389.60px">    MESSAGE = <span class="s">&quot;&quot;&quot;{&quot;event_data&quot;:{&quot;temperature&quot;:&quot;&quot;&quot;</span> + <span class="b">str</span>(temp_celsius) + <span class="s">&quot;&quot;&quot;,&quot;humidity&quot;:&quot;&quot;&quot;</span> + \</div>
<div class="ln" style="left:-7.5px;top:414.84px">272</div>
<div class="code" style="left:88px;top:415.86px">              <span class="b">str</span>(humidity_hr) + <span class="s">&quot;&quot;&quot;,&quot;loc&quot;:&quot;&quot;&quot;</span> + <span class="s">&quot;</span><span class="k">\"</span><span class="s">&quot;</span> + <span class="b">str</span>(latitude_dec) + <span class="s">&quot; &quot;</span> + <span class="b">str</span>(longitude_dec) \</div>
<div class="ln" style="left:-7.5px;top:441.10px">273</div>
<div class="code" style="left:88px;top:442.12px">              + <span class="s">&quot;</span><span class="k">\"</span><span class="s">&quot;</span> + <span class="s">&quot;&quot;&quot;,&quot;lat&quot;:&quot;&quot;&quot;</span> + <span class="b">str</span>(latitude_dec) + <span class="s">&quot;&quot;&quot;,&quot;lon&quot;:&quot;&quot;&quot;</span> + <span class="b">str</span>(longitude_dec) + <span class="s">&quot;&quot;&quot;}}&quot;&quot;&quot;</span></div>
<div class="ln" style="left:-7.5px;top:467.36px">274</div>
<div class="ln" style="left:-7.5px;top:493.62px">275</div>
<div class="code" style="left:88px;top:494.64px">    <span class="c"># print(MESSAGE)</span></div>
<div class="ln" style="left:-7.5px;top:519.88px">276</div>
<div class="ln" style="left:-7.5px;top:546.14px">277</div>
<div class="code" style="left:88px;top:547.16px">    <span class="c"># If the lat and lon are valid, transmit message to Medium One topic</span></div>
<div class="ln" style="left:-7.5px;top:572.40px">278</div>
<div class="code" style="left:88px;top:573.42px">    <span class="k">if</span> latitude_dec != <span class="n">9999</span> <span class="k">and</span> longitude_dec != <span class="n">9999</span>:</div>
<div class="ln" style="left:-7.5px;top:598.66px">279</div>
<div class="code" style="left:88px;top:599.68px">        <span class="b">print</span>(<span class="s">&quot;Publishing message... &quot;</span><span class="k">,</span> <span class="p">end</span>=<span class="s">&quot;&quot;</span>)</div>
<div class="ln" style="left:-7.5px;top:624.92px">280</div>
<div class="code" style="left:88px;top:625.94px">        client.publish(PUB_TOPIC<span class="k">,</span> MESSAGE)</div>
<div class="ln" style="left:-7.5px;top:651.18px">281</div>
<div class="code" style="left:88px;top:652.20px">        <span class="b">print</span>(<span class="s">&quot;[OK]&quot;</span>)</div>
<div class="ln" style="left:-7.5px;top:677.44px">282</div>
<div class="ln" style="left:-7.5px;top:703.70px">283</div>
<div class="code" style="left:88px;top:704.72px">    <span class="c"># Wait X seconds and then repeat, X is define by variable DELAY_AMT</span></div>
<div class="ln" style="left:-7.5px;top:729.96px">284</div>
<div class="code" style="left:88px;top:730.98px">    <span class="b">print</span>(<span class="s">&quot;&quot;</span>)</div>
<div class="ln" style="left:-7.5px;top:756.22px">285</div>
<div class="code" style="left:88px;top:757.24px">    time.sleep(DELAY_AMT)</div>
<div class="a" style="left:79px;top:0px;width:1px;height:776px;background:#5a5d5f;"></div>
<div class="a" style="left:127px;top:409px;width:1px;height:54px;background:#3b3b3b;"></div>
<div class="a" style="left:127px;top:592px;width:1px;height:81px;background:#3b3b3b;"></div>
<svg style="left:74px;top:-1.5200000000000102px;" width="12" height="12" viewBox="0 0 12 12"><rect x="0.5" y="0.5" width="11" height="11" fill="#313335" stroke="#5a5d5f"/><path d="M3.5 5.5H8.5" stroke="#5a5d5f"/></svg>
<svg style="left:74px;top:50.0px;" width="12" height="14" viewBox="0 0 12 14"><path d="M0.5 0.5H11.5V8.5L6 13L0.5 8.5Z" fill="#313335" stroke="#5a5d5f"/><path d="M3.5 5.5H8.5" stroke="#5a5d5f"/></svg>
<svg style="left:74px;top:496.4200000000001px;" width="12" height="14" viewBox="0 0 12 14"><path d="M0.5 0.5H11.5V8.5L6 13L0.5 8.5Z" fill="#313335" stroke="#5a5d5f"/><path d="M3.5 5.5H8.5" stroke="#5a5d5f"/></svg>
<svg style="left:74px;top:548.94px;" width="12" height="14" viewBox="0 0 12 14"><path d="M0.5 13.5H11.5V5.5L6 1L0.5 5.5Z" fill="#313335" stroke="#5a5d5f"/><path d="M3.5 8.5H8.5" stroke="#5a5d5f"/></svg>
<svg style="left:74px;top:575.2px;" width="12" height="14" viewBox="0 0 12 14"><path d="M0.5 0.5H11.5V8.5L6 13L0.5 8.5Z" fill="#313335" stroke="#5a5d5f"/><path d="M3.5 5.5H8.5" stroke="#5a5d5f"/></svg>
<svg style="left:74px;top:653.98px;" width="12" height="14" viewBox="0 0 12 14"><path d="M0.5 13.5H11.5V5.5L6 1L0.5 5.5Z" fill="#313335" stroke="#5a5d5f"/><path d="M3.5 8.5H8.5" stroke="#5a5d5f"/></svg>
<svg style="left:74px;top:759.0200000000001px;" width="12" height="14" viewBox="0 0 12 14"><path d="M0.5 13.5H11.5V5.5L6 1L0.5 5.5Z" fill="#313335" stroke="#5a5d5f"/><path d="M3.5 8.5H8.5" stroke="#5a5d5f"/></svg>
</div>
<div class="a" style="left:354px;top:880px;width:1563px;height:1px;background:#3a3c3e;"></div>
<div class="a" style="left:354px;top:881px;width:1563px;height:28px;background:#323436;"></div>
<div class="a" style="left:25px;top:909px;width:1892px;height:1px;background:#323232;"></div>
<div class="a" style="left:25px;top:910px;width:1892px;height:33px;background:#3c3f41;"></div>
<div class="t" style="left:32px;top:921.36px;font-size:13.75px;color:#bbbbbb;">XBee REPL Console</div>
<svg style="left:1861px;top:919px;" width="16" height="16" viewBox="0 0 16 16"><path d="M6.6 0H9.4L9.8 2.3L11.6 3.1L13.5 1.7L15.5 3.7L14.1 5.6L14.9 7.4L17 7.8V10.2L14.9 10.6L14.1 12.4L15.5 14.3L13.5 16.3L11.6 14.9L9.8 15.7L9.4 18H6.6L6.2 15.7L4.4 14.9L2.5 16.3L0.5 14.3L1.9 12.4L1.1 10.6L-1 10.2V7.8L1.1 7.4L1.9 5.6L0.5 3.7L2.5 1.7L4.4 3.1L6.2 2.3Z" transform="translate(0.5 -0.5) scale(0.9)" fill="#aeb0b2"/><circle cx="8" cy="7.6" r="2.6" fill="#3c3f41"/></svg>
<div class="a" style="left:1894px;top:926px;width:16px;height:2px;background:#aeb0b2;"></div>
<div class="a" style="left:25px;top:943px;width:1892px;height:1px;background:#323232;"></div>
<div class="a" style="left:25px;top:944px;width:1892px;height:30px;background:#3c3f41;"></div>
<div class="a" style="left:28px;top:949px;width:28px;height:25px;background:#5c5f61;border-radius:3px 3px 0 0"></div>
<svg style="left:32px;top:953px;" width="20" height="20" viewBox="0 0 20 20"><path d="M2 18.5L18.5 2" stroke="#4aa154" stroke-width="2.2" stroke-linecap="round"/><circle cx="10" cy="10.5" r="4.3" fill="#4aa154"/><path d="M7 7.5L13 13.5" stroke="#3f8a47" stroke-width="0.8"/></svg>
<svg style="left:68px;top:950px;" width="17" height="20" viewBox="0 0 17 20"><path d="M4.5 1.3H12.5L15.7 6.5V18.7H1.3V6.5Z" fill="none" stroke="#3b7cc4" stroke-width="2.6" stroke-linejoin="round"/></svg>
<div class="t" style="left:92px;top:954.98px;font-size:14.2px;color:#cccccc;font-weight:bold;">Selected XBee device:</div>
<div class="t" style="left:248px;top:953.88px;font-size:15.5px;color:#bbbbbb;">COM8 - 9600/8/N/1/N</div>
<div class="a" style="left:406px;top:956px;width:2px;height:14px;background:#a9abad;"></div>
<div class="a" style="left:432px;top:944px;width:110px;height:29px;background:#424445;"></div>
<div class="a" style="left:438px;top:950px;width:98px;height:17px;background:#4d4e4f;filter:blur(4px)"></div>
<div class="a" style="left:0px;top:974px;width:1917px;height:1px;background:#323232;"></div>
<div class="a" style="left:0px;top:975px;width:1917px;height:27px;background:#3c3f41;"></div>
<div class="a" style="left:0px;top:1002px;width:1917px;height:1px;background:#323232;"></div>
<svg style="left:35px;top:983px;" width="16" height="16" viewBox="0 0 16 16"><path d="M2 1V15M2 10a5 5 0 0 1 5-5H13" fill="none" stroke="#aeb0b2" stroke-width="2"/><path d="M10 1.5L14 5L10 8.5" fill="none" stroke="#aeb0b2" stroke-width="2"/></svg>
<div class="t" style="left:56px;top:985.83px;font-size:12.6px;color:#bbbbbb;">Git</div>
<svg style="left:98px;top:984px;" width="11" height="13" viewBox="0 0 11 13"><path d="M0 0L11 6.5L0 13Z" fill="#aeb0b2"/></svg>
<div class="t" style="left:117px;top:985.83px;font-size:12.6px;color:#bbbbbb;">Run</div>
<svg style="left:164px;top:984px;" width="14" height="12" viewBox="0 0 14 12"><path d="M0 1H2.5M4 1H13.5M0 5.5H2.5M4 5.5H13.5M0 10H2.5M4 10H13.5" stroke="#aeb0b2" stroke-width="2"/></svg>
<div class="t" style="left:183px;top:985.83px;font-size:12.6px;color:#bbbbbb;">TODO</div>
<svg style="left:246px;top:983px;" width="14" height="14" viewBox="0 0 14 14"><circle cx="7" cy="7" r="7" fill="#aeb0b2"/><rect x="6" y="2.8" width="2" height="5.5" fill="#3c3f41"/><rect x="6" y="9.6" width="2" height="2" fill="#3c3f41"/></svg>
<div class="t" style="left:266px;top:985.83px;font-size:12.6px;color:#bbbbbb;">Problems</div>
<svg style="left:348px;top:983px;" width="15" height="14" viewBox="0 0 15 14"><rect x="0" y="0" width="15" height="14" fill="#aeb0b2"/><path d="M2.5 3L5.5 5.5L2.5 8M6 11H12" fill="none" stroke="#3c3f41" stroke-width="1.3"/></svg>
<div class="t" style="left:368px;top:985.83px;font-size:12.6px;color:#bbbbbb;">Terminal</div>
<svg style="left:445px;top:983px;" width="15" height="15" viewBox="0 0 15 15"><path d="M7 0C4.5 0 3.5 1 3.5 2.5V4.5H7.5V5.3H2C0.8 5.3 0 6.3 0 8s.8 2.8 2 2.8H3.5V9C3.5 7.8 4.5 7 5.8 7H9.5c1 0 1.8-.8 1.8-1.8V2.5C11.3 1 10 0 7 0z" fill="#aeb0b2"/><path d="M8 15c2.5 0 3.5-1 3.5-2.5V10.5H7.5V9.7H13c1.2 0 2-1 2-2.7s-.8-2.8-2-2.8H11.5V6C11.5 7.2 10.5 8 9.2 8H5.5c-1 0-1.8.8-1.8 1.8v2.7C3.7 14 5 15 8 15z" fill="#aeb0b2"/></svg>
<div class="t" style="left:466px;top:985.83px;font-size:12.6px;color:#bbbbbb;">Python Console</div>
<div class="a" style="left:570px;top:975px;width:164px;height:27px;background:#2d2f30;"></div>
<svg style="left:587px;top:983px;" width="14" height="14" viewBox="0 0 14 14"><rect x="0" y="0" width="14" height="14" fill="#c0c2c4"/><path d="M3.3 3.5V14M7 0V10.5M10.7 3.5V14" stroke="#2d2f30" stroke-width="1.3"/></svg>
<div class="t" style="left:607px;top:986.09px;font-size:12.3px;color:#e8e8e8;">XBee REPL Console</div>
<svg style="left:752px;top:982px;" width="14" height="16" viewBox="0 0 14 16"><path d="M3 3a4 3 0 0 1 8 0V8H3Z" fill="#aeb0b2"/><path d="M2 8H12L11 15H3Z" fill="#aeb0b2"/></svg>
<div class="t" style="left:772px;top:985.83px;font-size:12.6px;color:#bbbbbb;">Inspection Results</div>
<svg style="left:1799px;top:982px;" width="17" height="17" viewBox="0 0 17 17"><path d="M15.5 16V8.5a7 7 0 1 0-7 7.5Z" fill="none" stroke="#aeb0b2" stroke-width="1.8"/></svg>
<div class="t" style="left:1821px;top:985.83px;font-size:12.6px;color:#bbbbbb;">Event Log</div>
<div class="a" style="left:0px;top:1003px;width:1917px;height:25px;background:#3c3f41;"></div>
<svg style="left:5px;top:1008px;" width="15" height="15" viewBox="0 0 15 15"><rect x="3.75" y="0.75" width="10.5" height="10.5" fill="none" stroke="#aeb0b2" stroke-width="1.5"/><path d="M0.75 3.5V14.25H11.5" fill="none" stroke="#aeb0b2" stroke-width="1.5"/></svg>
<div class="t" style="left:1247px;top:1008.81px;font-size:14.4px;color:#bbbbbb;">59:18</div>
<div class="t" style="left:1297px;top:1008.81px;font-size:14.4px;color:#bbbbbb;">CRLF</div>
<div class="t" style="left:1345px;top:1008.81px;font-size:14.4px;color:#bbbbbb;">UTF-8</div>
<div class="t" style="left:1398px;top:1008.81px;font-size:14.4px;color:#bbbbbb;">4 spaces</div>
<div class="t" style="left:1470px;top:1008.81px;font-size:14.4px;color:#bbbbbb;">Python 3.7 (5G_ColdAssetMonitorFirmware)</div>
<svg style="left:1772px;top:1006px;" width="16" height="20" viewBox="0 0 16 20"><path d="M4 3V17M4 14C4 9.5 12 10 12 4.5" fill="none" stroke="#a9abad" stroke-width="2"/><circle cx="4" cy="2.8" r="2" fill="#a9abad"/><circle cx="4" cy="17.2" r="2" fill="#a9abad"/><circle cx="12" cy="4" r="2" fill="#a9abad"/></svg>
<div class="t" style="left:1792px;top:1008.81px;font-size:14.4px;color:#bbbbbb;">main</div>
<svg style="left:1836px;top:1007px;" width="16" height="17" viewBox="0 0 16 17"><path d="M2 6V5a3.6 3.6 0 0 1 7.2 0V9" fill="none" stroke="#b3b5b7" stroke-width="2"/><rect x="5" y="8" width="10.5" height="8" fill="#b3b5b7"/></svg>
<svg style="left:1858px;top:1003px;" width="25" height="25" viewBox="0 0 25 25"><path d="M10.5 3.2L20.7 8L20 12.4L12.9 10.2L8.8 15.8L5.1 12.4Z" fill="#a8aaac"/><path d="M13.6 11.7L19.2 14.1L16.5 22.6L10.5 17Z" fill="#a8aaac"/></svg>
<svg style="left:1888px;top:1008px;" width="16" height="16" viewBox="0 0 16 16"><circle cx="7.8" cy="7.8" r="7.7" fill="#d65a55"/><rect x="6.8" y="3" width="2" height="6" fill="#6a2724"/><rect x="6.8" y="10.6" width="2" height="2" fill="#6a2724"/></svg>
</body></html>
